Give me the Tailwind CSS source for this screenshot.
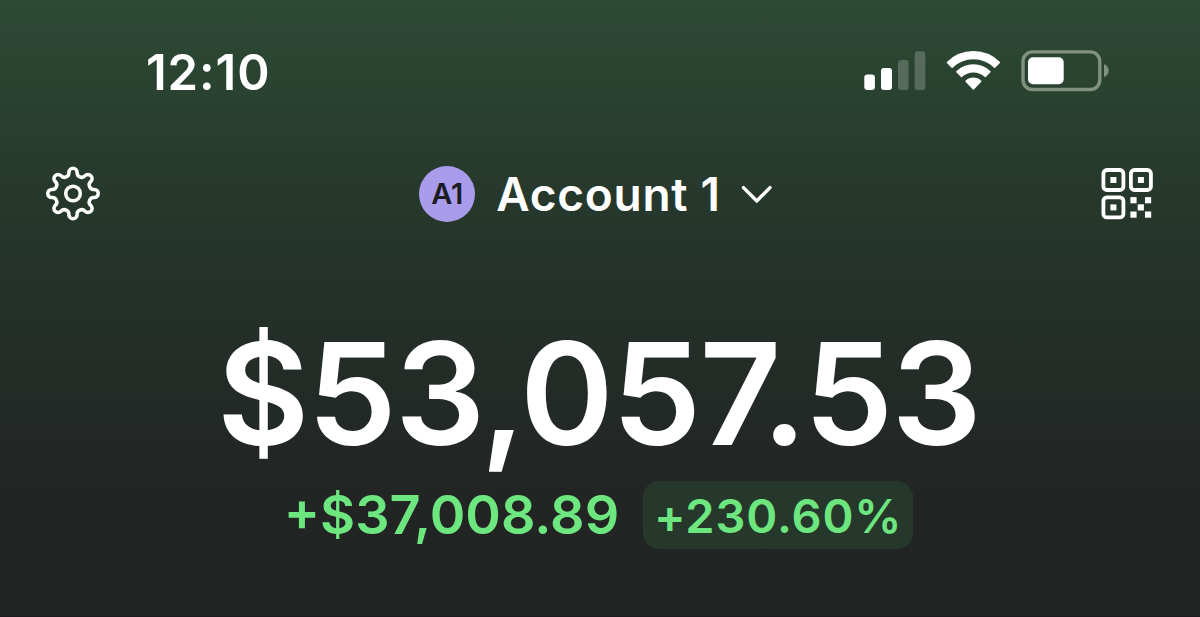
<!DOCTYPE html>
<html lang="en">
<head>
    <meta charset="UTF-8" />
    <meta name="viewport" content="width=device-width, initial-scale=1.0">
    <title>Wallet</title>
    <script src="https://cdn.jsdelivr.net/npm/@tailwindcss/browser@4"></script>
</head>
<body class="h-[617px] overflow-hidden border-b border-[#1c1b1d] bg-[linear-gradient(180deg,#2d4a37_0%,#2a4331_13%,#26382c_32%,#242d28_57%,#222524_80%,#222423_100%)] font-['Inter',sans-serif] text-white">

    <!-- Status bar -->
    <div class="flex h-36 items-center justify-between pr-[91px] pl-[146px]">
        <span class="text-[49px] leading-none font-semibold tracking-[0.9px]">12:10</span>
        <svg class="h-12 w-[246px]" viewBox="863 48 246 48" fill="none">
            <!-- Signal -->
            <rect x="864.3" y="74.5" width="10.6" height="15.5" rx="3" fill="#fff" />
            <rect x="881" y="68" width="11" height="22" rx="3" fill="#fff" />
            <rect x="898" y="60" width="10.6" height="30" rx="3" fill="#566b5c" />
            <rect x="914.7" y="51.3" width="10.6" height="38.7" rx="3" fill="#566b5c" />
            <!-- Wifi -->
            <g fill="#fff" stroke="#fff" stroke-width="1.4" stroke-linejoin="round">
                <path d="M947.4 62.4A37 37 0 0 1 999.4 62.4L994.7 67.2A30.4 30.4 0 0 0 952.1 67.2Z" />
                <path d="M956.8 71.8A23.8 23.8 0 0 1 990 71.8L985.3 76.5A17.2 17.2 0 0 0 961.5 76.5Z" />
                <path d="M966 81.2A10.5 10.5 0 0 1 980.8 81.2L973.4 88.9Z" />
            </g>
            <!-- Battery -->
            <rect x="1023" y="51.9" width="76.8" height="37.6" rx="9.5" stroke="#80917f" stroke-width="3.4" />
            <rect x="1028" y="57.2" width="35.7" height="27" rx="5" fill="#fff" />
            <path d="M1104 64.2C1110.2 66 1110.2 75.2 1104 77Z" fill="#80917f" />
        </svg>
    </div>

    <!-- Account header -->
    <header class="flex h-[99px] items-center justify-between pr-[47px] pl-[45px]">
        <svg class="size-14" viewBox="-28 -27.5 56 56" fill="none" stroke="#fff" stroke-width="3.5" stroke-linejoin="round">
            <path d="M-4.1-21.16A4.1 4.1 0 1 1 4.1-21.16A4.5 4.5 0 0 0 12.06-17.86A4.1 4.1 0 1 1 17.86-12.06A4.5 4.5 0 0 0 21.16-4.1A4.1 4.1 0 1 1 21.16 4.1A4.5 4.5 0 0 0 17.86 12.06A4.1 4.1 0 1 1 12.06 17.86A4.5 4.5 0 0 0 4.1 21.16A4.1 4.1 0 1 1-4.1 21.16A4.5 4.5 0 0 0-12.06 17.86A4.1 4.1 0 1 1-17.86 12.06A4.5 4.5 0 0 0-21.16 4.1A4.1 4.1 0 1 1-21.16-4.1A4.5 4.5 0 0 0-17.86-12.06A4.1 4.1 0 1 1-12.06-17.86A4.5 4.5 0 0 0-4.1-21.16Z" />
            <circle r="7.3" />
        </svg>
        <div class="mr-[10px] flex items-center">
            <span class="flex size-14 items-center justify-center rounded-full bg-[#a99deb] text-[29px] leading-none font-semibold text-[#1c1c24]">A1</span>
            <span class="ml-[21px] text-[46px] leading-none font-semibold tracking-[0.7px]">Account 1</span>
            <svg class="ml-5 h-5 w-8" viewBox="0 0 32 20" fill="none" stroke="#fff" stroke-width="3.4" stroke-linecap="round" stroke-linejoin="round">
                <path d="M2.5 3.6L15.8 17L29 3.6" />
            </svg>
        </div>
        <svg class="size-[52px]" viewBox="1101 167.9 52 52" fill="none">
            <g stroke="#fff" stroke-width="3.8">
                <rect x="1103.4" y="169.9" width="20" height="20" rx="3.5" />
                <rect x="1130.9" y="169.9" width="20" height="20" rx="3.5" />
                <rect x="1103.4" y="197.3" width="20" height="20" rx="3.5" />
            </g>
            <g fill="#fff">
                <rect x="1110.4" y="176.9" width="6" height="6" />
                <rect x="1137.9" y="176.9" width="6" height="6" />
                <rect x="1110.4" y="204.3" width="6" height="6" />
                <rect x="1130.4" y="197" width="6.2" height="6.2" />
                <rect x="1145" y="197" width="6.2" height="6.2" />
                <rect x="1137.7" y="204.2" width="6.2" height="6.2" />
                <rect x="1130.4" y="211.4" width="6.2" height="6.2" />
                <rect x="1145" y="211.4" width="6.2" height="6.2" />
            </g>
        </svg>
    </header>

    <!-- Balance -->
    <main class="flex flex-col items-center pt-[70px] pr-[3px]">
        <h1 class="h-[161px] text-[142px] leading-[161px] font-semibold tracking-[-1.8px]">$53,057.53</h1>
        <div class="mt-[7px] flex h-[68px] items-center text-[#6ee67f]">
            <span class="text-[54px] leading-none font-semibold">+$37,008.89</span>
            <span class="ml-6 flex h-[68px] w-[270px] items-center justify-center rounded-2xl bg-[#26382c] text-[47px] leading-none font-semibold tracking-[0.9px]">+230.60%</span>
        </div>
    </main>

</body>
</html>
